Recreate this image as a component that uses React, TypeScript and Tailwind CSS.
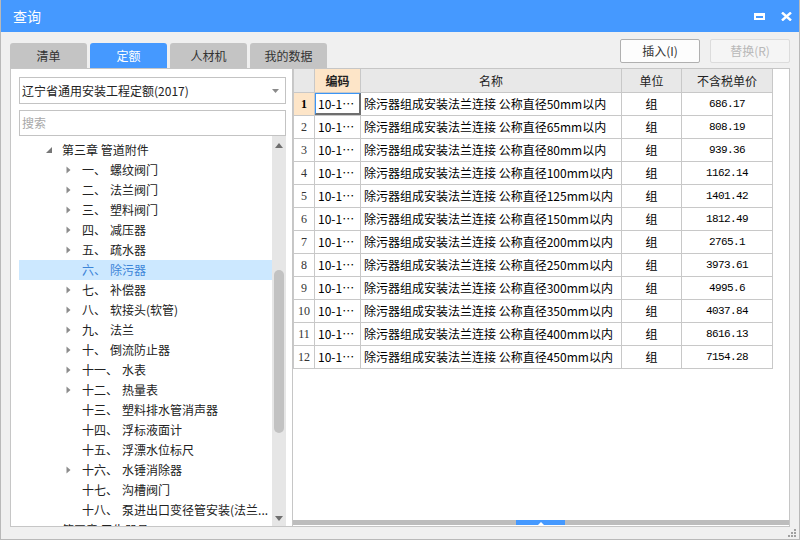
const tree: { label: string; name: string; arrow: boolean }[] = [
  { label: "一、", name: "螺纹阀门", arrow: true },
  { label: "二、", name: "法兰阀门", arrow: true },
  { label: "三、", name: "塑料阀门", arrow: true },
  { label: "四、", name: "减压器", arrow: true },
  { label: "五、", name: "疏水器", arrow: true },
  { label: "六、", name: "除污器", arrow: false },
  { label: "七、", name: "补偿器", arrow: true },
  { label: "八、", name: "软接头(软管)", arrow: true },
  { label: "九、", name: "法兰", arrow: true },
  { label: "十、", name: "倒流防止器", arrow: true },
  { label: "十一、", name: "水表", arrow: true },
  { label: "十二、", name: "热量表", arrow: true },
  { label: "十三、", name: "塑料排水管消声器", arrow: false },
  { label: "十四、", name: "浮标液面计", arrow: false },
  { label: "十五、", name: "浮漂水位标尺", arrow: false },
  { label: "十六、", name: "水锤消除器", arrow: true },
  { label: "十七、", name: "沟槽阀门", arrow: false },
  { label: "十八、", name: "泵进出口变径管安装(法兰...", arrow: false },
];

const rows: [string, string][] = [
  ["50", "686.17"],
  ["65", "808.19"],
  ["80", "939.36"],
  ["100", "1162.14"],
  ["125", "1401.42"],
  ["150", "1812.49"],
  ["200", "2765.1"],
  ["250", "3973.61"],
  ["300", "4995.6"],
  ["350", "4037.84"],
  ["400", "8616.13"],
  ["450", "7154.28"],
];

const tabs = ["清单", "定额", "人材机", "我的数据"];

function RightArrow() {
  return (
    <svg width="5" height="8" viewBox="0 0 5 8" className="shrink-0">
      <path d="M0.5 0.5 L4.5 4 L0.5 7.5 Z" fill="#8c8c8c" />
    </svg>
  );
}

function TreeRow({ label, name, arrow, active }: { label: string; name: string; arrow: boolean; active?: boolean }) {
  return (
    <div
      className={`flex h-[20px] items-center whitespace-nowrap pl-[47px] ${
        active ? "bg-[#cce8ff] text-[#3d85d8]" : "text-[#222]"
      }`}
    >
      <div className="w-[16px] shrink-0">{arrow && <RightArrow />}</div>
      <span className="shrink-0">{label}</span>
      <span className="ml-[4px]">{name}</span>
    </div>
  );
}

export default function App() {
  return (
    <div className="flex h-[540px] w-[800px] flex-col overflow-hidden border-x border-b border-[#b9b9b9] bg-[#f0f0f0] font-['Noto_Sans_CJK_SC',sans-serif] text-[12px] leading-none text-[#222]">
      {/* title bar */}
      <div className="flex h-[32px] shrink-0 items-center bg-[#4599ff] pl-[12px] pr-[7px] text-white">
        <span className="text-[14px]">查询</span>
        <div className="ml-auto flex items-center gap-[16px]">
          <div className="h-[7px] w-[11px] border-2 border-t-[3px] border-white" />
          <svg width="11" height="9" viewBox="0 0 11 9">
            <path d="M1 0.5 L10 8.5 M10 0.5 L1 8.5" stroke="white" strokeWidth="2.4" />
          </svg>
        </div>
      </div>

      {/* tabs + buttons */}
      <div className="mt-[7px] flex h-[29px] shrink-0 items-end px-[9px]">
        <div className="flex gap-[3px]">
          {tabs.map((t, i) => (
            <div
              key={t}
              className={`flex h-[25px] w-[77px] items-center justify-center rounded-t-[3px] text-[12px] ${
                i === 1 ? "bg-[#4599ff] text-white" : "bg-[#c4c4c4] text-[#333]"
              }`}
            >
              {t}
            </div>
          ))}
        </div>
        <div className="mb-[5px] ml-auto flex gap-[10px]">
          <div className="flex h-[24px] w-[80px] items-center justify-center rounded-[2px] border border-[#b0b0b0] bg-[#fdfdfd] text-[#333]">
            插入(I)
          </div>
          <div className="flex h-[24px] w-[80px] items-center justify-center rounded-[2px] border border-[#dcdcdc] bg-[#f5f5f5] text-[#b8b8b8]">
            替换(R)
          </div>
        </div>
      </div>

      {/* panels */}
      <div className="flex h-[459px] shrink-0 px-[9px]">
        {/* left panel */}
        <div className="flex w-[283px] shrink-0 flex-col border border-[#c6c6c6] bg-white pl-[8px] pr-[6px] pt-[8px]">
          <div className="flex h-[27px] shrink-0 items-center border border-[#c3c3c3] pl-[2px] pr-[6px] text-[12px] text-[#222]">
            <span>辽宁省通用安装工程定额(2017)</span>
            <svg width="7" height="4" viewBox="0 0 7 4" className="ml-auto">
              <path d="M0 0 H7 L3.5 4 Z" fill="#8a8a8a" />
            </svg>
          </div>
          <div className="mt-[6px] flex h-[26px] shrink-0 items-center border border-[#c3c3c3] pl-[2px] text-[#a8a8a8]">
            搜索
          </div>
          <div className="flex min-h-0 flex-1">
            <div className="w-[253px] overflow-hidden pt-[4px]">
              <div className="flex h-[20px] items-center pl-[27px]">
                <svg width="6" height="6" viewBox="0 0 6 6" className="shrink-0">
                  <path d="M6 0 V6 H0 Z" fill="#777" />
                </svg>
                <span className="ml-[10px]">第三章 管道附件</span>
              </div>
              {tree.map((t) => (
                <TreeRow key={t.label} {...t} active={t.label === "六、"} />
              ))}
              <div className="flex h-[20px] items-center pl-[43px]">第四章 卫生器具</div>
            </div>
            <div className="flex w-[14px] shrink-0 flex-col bg-[#e6e6e6] pt-[2px]">
              <div className="flex h-[14px] items-center justify-center">
                <svg width="8" height="5" viewBox="0 0 8 5">
                  <path d="M0 5 L4 0 L8 5 Z" fill="#6f6f6f" />
                </svg>
              </div>
              <div className="h-[118px]" />
              <div className="mx-[2px] h-[163px] rounded-[5px] bg-[#c2c2c2]" />
              <div className="flex-1" />
              <div className="flex h-[14px] items-center justify-center pb-[2px]">
                <svg width="8" height="5" viewBox="0 0 8 5">
                  <path d="M0 0 L8 0 L4 5 Z" fill="#6f6f6f" />
                </svg>
              </div>
            </div>
          </div>
        </div>

        {/* table panel */}
        <div className="flex flex-1 flex-col border-y border-r border-[#c6c6c6] bg-white">
          <div className="min-h-0 flex-1">
            <div className="flex h-[24px] w-fit border-b border-[#c8c8c8] text-[#222]">
              <div className="w-[22px] border-x border-[#c8c8c8] bg-[#e8e8e8]" />
              <div className="flex w-[46px] items-center justify-center border-r border-[#c8c8c8] bg-[#fde5c8] font-bold">
                编码
              </div>
              <div className="flex w-[261px] items-center justify-center border-r border-[#c8c8c8] bg-[#e8e8e8]">名称</div>
              <div className="flex w-[60px] items-center justify-center border-r border-[#c8c8c8] bg-[#e8e8e8]">单位</div>
              <div className="flex w-[91px] items-center justify-center border-r border-[#c8c8c8] bg-[#e8e8e8]">不含税单价</div>
            </div>
            {rows.map(([d, p], i) => (
              <div key={i} className="flex h-[23px] w-fit border-b border-[#c8c8c8] text-black">
                <div
                  className={`flex w-[22px] items-center justify-center border-x border-[#c8c8c8] font-['Liberation_Serif',serif] text-[12px] ${
                    i === 0 ? "bg-[#fde5c8] font-bold" : "text-[#333]"
                  }`}
                >
                  {i + 1}
                </div>
                {i === 0 ? (
                  <div className="flex w-[46px] items-center border-b-2 border-l border-r-2 border-t border-b-[#6e6e6e] border-l-[#3b95f5] border-r-[#6e6e6e] border-t-[#3b95f5] pl-[2px]">
                    10-1…
                  </div>
                ) : (
                  <div className="flex w-[46px] items-center border-r border-[#c8c8c8] pl-[3px]">10-1…</div>
                )}
                <div className="flex w-[261px] items-center whitespace-pre border-r border-[#c8c8c8] pl-[3px]">
                  {`除污器组成安装法兰连接 公称直径${d}mm以内`}
                </div>
                <div className="flex w-[60px] items-center justify-center border-r border-[#c8c8c8]">组</div>
                <div className="flex w-[91px] items-center justify-center border-r border-[#c8c8c8] font-['Liberation_Mono',monospace] text-[11px] tracking-[-0.6px]">
                  {p}
                </div>
              </div>
            ))}
          </div>
          <div className="mb-px flex h-[5px] shrink-0 bg-[#bdbdbd]">
            <div className="w-[223px]" />
            <div className="flex w-[49px] items-end justify-center bg-[#4599ff]">
              <svg width="6" height="3" viewBox="0 0 6 3">
                <path d="M0 3 L3 0 L6 3 Z" fill="white" />
              </svg>
            </div>
          </div>
        </div>
      </div>

      {/* grip */}
      <div className="flex flex-1 items-end justify-end pb-[2px] pr-[3px]">
        <svg width="8" height="8" viewBox="0 0 8 8">
          <rect x="6" y="0" width="2" height="2" fill="#a0a0a0" />
          <rect x="3" y="3" width="2" height="2" fill="#a0a0a0" />
          <rect x="6" y="3" width="2" height="2" fill="#a0a0a0" />
          <rect x="0" y="6" width="2" height="2" fill="#a0a0a0" />
          <rect x="3" y="6" width="2" height="2" fill="#a0a0a0" />
          <rect x="6" y="6" width="2" height="2" fill="#a0a0a0" />
        </svg>
      </div>
    </div>
  );
}
